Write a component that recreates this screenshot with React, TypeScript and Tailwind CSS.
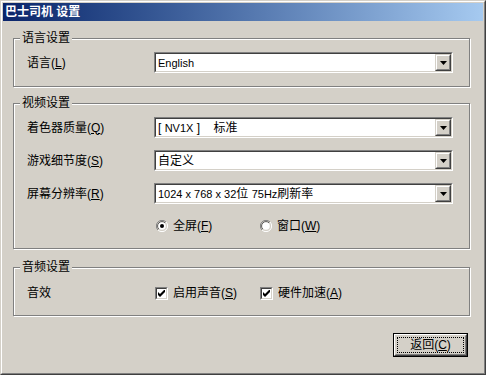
import React from 'react';

const FONT = { fontFamily: '"Liberation Sans", "Noto Sans CJK SC", sans-serif' };

const Acc = ({ k }: { k: string }) => (
  <span>
    (<span className="underline">{k}</span>)
  </span>
);

const Arrow = () => (
  <svg width="7" height="4" viewBox="0 0 7 4">
    <path d="M0 0h7L3.5 4z" fill="#000" />
  </svg>
);

const DropBtn = () => (
  <div className="w-[16px] h-[17px] border border-t-[#D4D0C8] border-l-[#D4D0C8] border-r-[#404040] border-b-[#404040]">
    <div className="h-full border border-t-white border-l-white border-r-[#808080] border-b-[#808080] bg-[#D4D0C8] flex items-center justify-center">
      <Arrow />
    </div>
  </div>
);

const Combo = ({ value }: { value: React.ReactNode }) => (
  <div className="w-[299px] h-[21px] border border-t-[#808080] border-l-[#808080] border-r-white border-b-white">
    <div className="h-full border border-t-[#404040] border-l-[#404040] border-r-[#D4D0C8] border-b-[#D4D0C8] bg-white flex items-center">
      <span className="flex-1 pl-[2px] whitespace-pre text-black">{value}</span>
      <DropBtn />
    </div>
  </div>
);

const Radio = ({ checked }: { checked?: boolean }) => (
  <svg width="12" height="12" viewBox="0 0 12 12">
    <path d="M10 2A5.5 5.5 0 0 0 2 10" fill="none" stroke="#808080" />
    <path d="M9 3A4.2 4.2 0 0 0 3 9" fill="none" stroke="#404040" />
    <path d="M2 10A5.5 5.5 0 0 0 10 2" fill="none" stroke="#fff" />
    <circle cx="6" cy="6" r="3.8" fill="#fff" />
    {checked && <circle cx="6" cy="6" r="2" fill="#000" />}
  </svg>
);

const Check = () => (
  <div className="w-[13px] h-[13px] border border-t-[#808080] border-l-[#808080] border-r-white border-b-white">
    <div className="h-full border border-t-[#404040] border-l-[#404040] border-r-[#D4D0C8] border-b-[#D4D0C8] bg-white flex items-center justify-center">
      <svg width="7" height="7" viewBox="0 0 7 7">
        <path d="M0 2v3l2 2 5-5V-1L2 4z" fill="#000" />
      </svg>
    </div>
  </div>
);

const Group = ({ title, className, children }: { title: string; className: string; children: React.ReactNode }) => (
  <div className={`relative ml-[10px] w-[457px] border border-[#808080] shadow-[1px_1px_0_#fff,inset_1px_1px_0_#fff] ${className}`}>
    <span className="absolute left-[6px] top-[-8px] px-[2px] bg-[#D4D0C8] leading-[14px]">{title}</span>
    {children}
  </div>
);

const Row = ({ label, children }: { label: React.ReactNode; children: React.ReactNode }) => (
  <div className="flex items-center">
    <span className="w-[127px]">{label}</span>
    {children}
  </div>
);

export default function App() {
  return (
    <div style={FONT} className="w-[486px] h-[375px] text-[12px] text-black bg-[#D4D0C8] border border-t-[#D4D0C8] border-l-[#D4D0C8] border-r-[#404040] border-b-[#404040]">
      <div className="h-full border border-t-white border-l-white border-r-[#808080] border-b-[#808080] p-[1px] flex flex-col">
        <div className="h-[18px] bg-gradient-to-r from-[#0A246A] to-[#A6CAF0] flex items-center pl-[2px] text-white font-bold">
          巴士司机 设置
        </div>

        <Group title="语言设置" className="mt-[17px] h-[49px] pl-[13px] pt-[13px]">
          <Row label={<>语言<Acc k="L" /></>}>
            <Combo value={<span className="text-[11px]">English</span>} />
          </Row>
        </Group>

        <Group title="视频设置" className="mt-[16px] h-[146px] pl-[13px] pt-[13px]">
          <div className="flex flex-col gap-[12px]">
            <Row label={<>着色器质量<Acc k="Q" /></>}>
              <Combo value={<>[ <span className="text-[11px]">NV1X</span> ]    标准</>} />
            </Row>
            <Row label={<>游戏细节度<Acc k="S" /></>}>
              <Combo value="自定义" />
            </Row>
            <Row label={<>屏幕分辨率<Acc k="R" /></>}>
              <Combo value={<><span className="text-[11px]">1024 x 768 x 32</span>位 <span className="text-[11px]">75Hz</span>刷新率</>} />
            </Row>
          </div>
          <div className="flex items-center mt-[13px] pl-[129px]">
            <div className="flex items-center gap-[5px] w-[104px]">
              <Radio checked />
              <span>全屏<Acc k="F" /></span>
            </div>
            <div className="flex items-center gap-[5px]">
              <Radio />
              <span>窗口<Acc k="W" /></span>
            </div>
          </div>
        </Group>

        <Group title="音频设置" className="mt-[18px] h-[49px] pl-[13px] pt-[16px]">
          <div className="flex items-center">
            <span className="w-[128px]">音效</span>
            <div className="flex items-center gap-[5px] w-[105px]">
              <Check />
              <span>启用声音<Acc k="S" /></span>
            </div>
            <div className="flex items-center gap-[5px]">
              <Check />
              <span>硬件加速<Acc k="A" /></span>
            </div>
          </div>
        </Group>

        <div className="flex justify-end mt-[17px] pr-[15px]">
          <div className="w-[75px] h-[24px] border border-black">
            <div className="h-full border border-t-white border-l-white border-r-[#404040] border-b-[#404040]">
              <div className="h-full border border-t-[#D4D0C8] border-l-[#D4D0C8] border-r-[#808080] border-b-[#808080] p-[1px]">
                <div className="h-full outline-1 outline-dotted outline-black -outline-offset-1 flex items-center justify-center">
                  返回<Acc k="C" />
                </div>
              </div>
            </div>
          </div>
        </div>
      </div>
    </div>
  );
}
